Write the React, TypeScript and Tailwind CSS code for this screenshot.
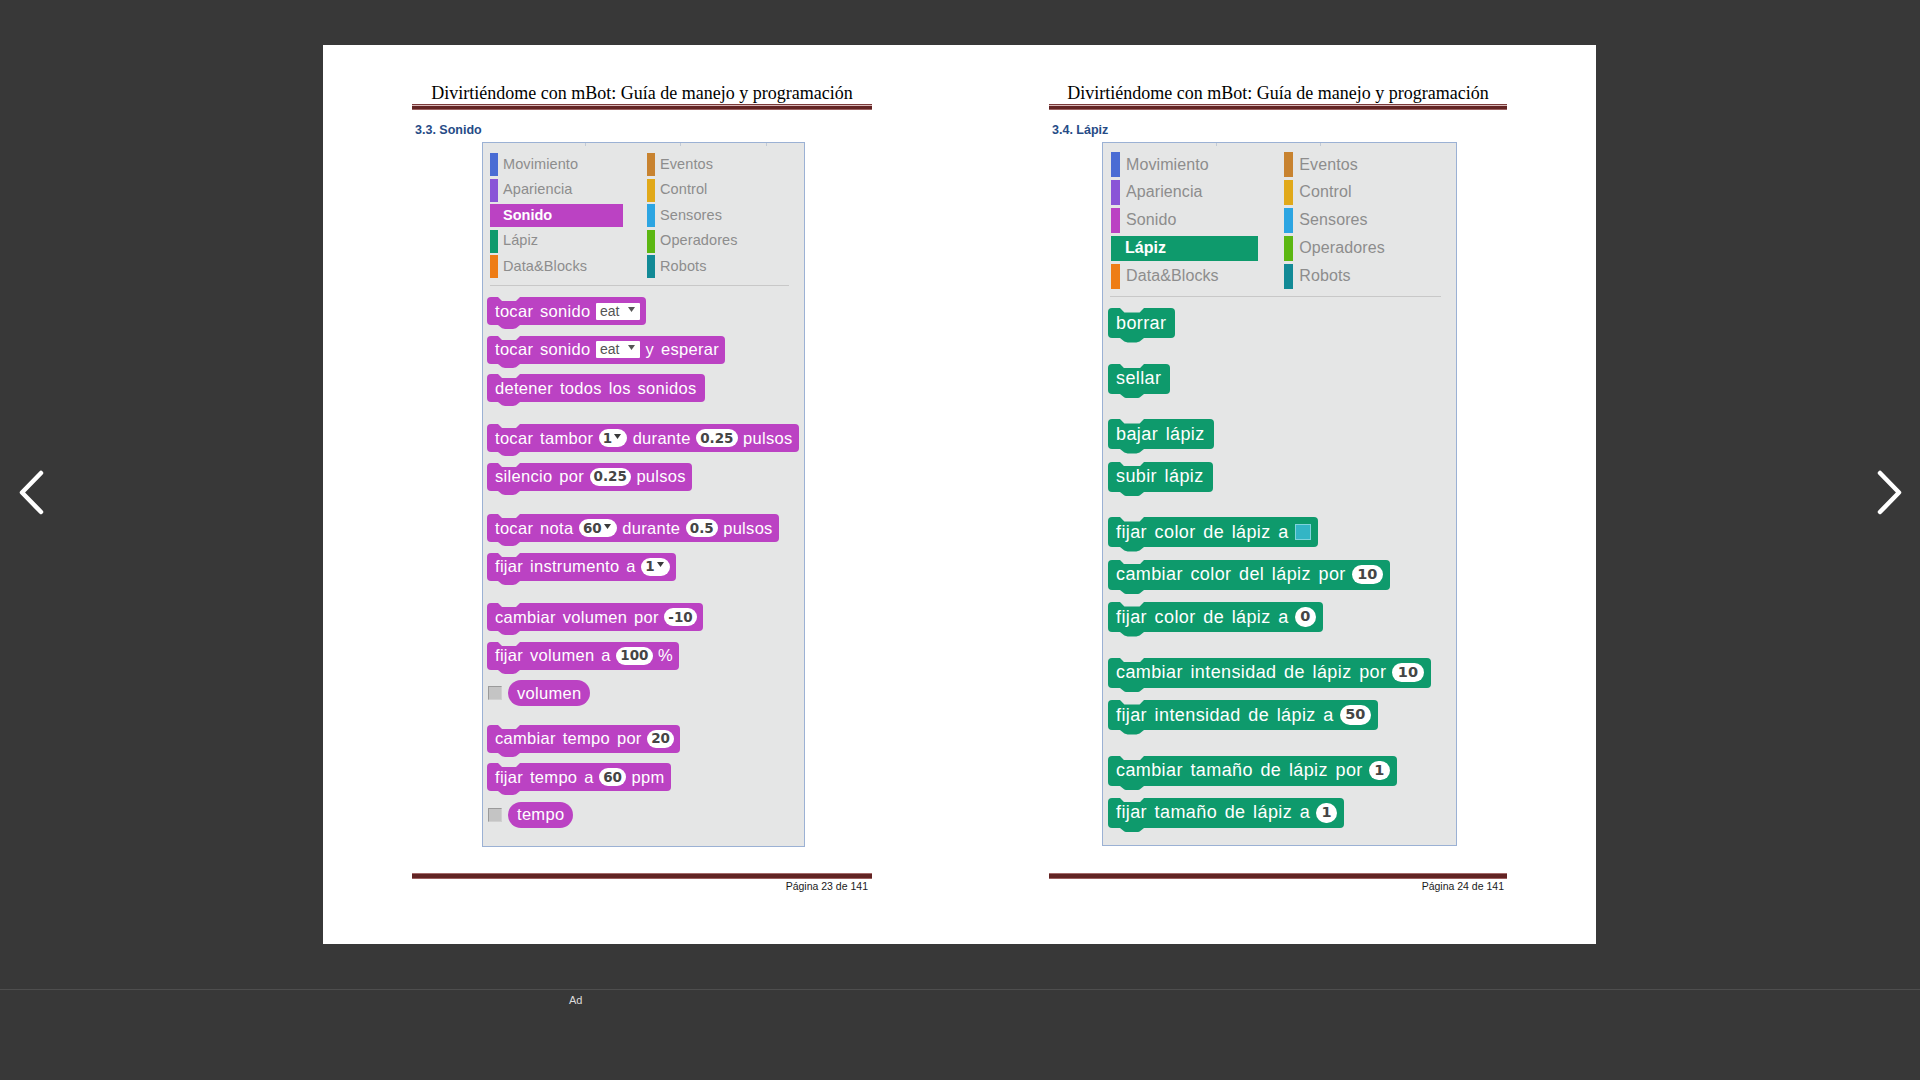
import clsx from 'clsx'
import type { ReactNode } from 'react'

type Size = 'sm' | 'lg'
type Tint = 'purple' | 'green'

interface Cat {
  name: string
  bar: string
}

const leftCats: Cat[] = [
  { name: 'Movimiento', bar: 'bg-[#4a6cd4]' },
  { name: 'Apariencia', bar: 'bg-[#8a55d7]' },
  { name: 'Sonido', bar: 'bg-[#bb42c3]' },
  { name: 'Lápiz', bar: 'bg-[#0e9a6c]' },
  { name: 'Data&Blocks', bar: 'bg-[#ee7d16]' },
]

const rightCats: Cat[] = [
  { name: 'Eventos', bar: 'bg-[#c88330]' },
  { name: 'Control', bar: 'bg-[#e1a91a]' },
  { name: 'Sensores', bar: 'bg-[#2ca5e2]' },
  { name: 'Operadores', bar: 'bg-[#5cb712]' },
  { name: 'Robots', bar: 'bg-[#128a96]' },
]

const blockBg: Record<Tint, string> = {
  purple: 'bg-[#bb42c3]',
  green: 'bg-[#0e9a6c]',
}

const blockFill: Record<Tint, string> = {
  purple: '#bb42c3',
  green: '#0e9a6c',
}

function Categories({ size, selected }: { size: Size; selected: string }) {
  const sm = size === 'sm'
  const row = (c: Cat) => {
    if (c.name === selected) {
      return (
        <div
          key={c.name}
          className={clsx(
            'flex items-center font-bold text-white',
            c.bar,
            sm ? 'h-[23px] w-[133px] pl-[13px] text-[14.5px]' : 'h-[25px] w-[147px] pl-[14px] text-[16px]'
          )}
        >
          {c.name}
        </div>
      )
    }
    return (
      <div key={c.name} className={clsx('flex items-center', sm ? 'h-[23px]' : 'h-[25px]')}>
        <span className={clsx('h-full', c.bar, sm ? 'w-[8px]' : 'w-[9px]')} />
        <span
          className={clsx(
            'text-[#8d8d8d]',
            sm ? 'ml-[5px] text-[14.5px] tracking-[0.1px]' : 'ml-[6px] text-[16px] tracking-[0.1px]'
          )}
        >
          {c.name}
        </span>
      </div>
    )
  }
  return (
    <div className={clsx('flex', sm ? 'pl-[7px]' : 'pl-[8px]')}>
      <div className={clsx('flex flex-col', sm ? 'w-[157px] gap-[2.5px]' : 'w-[173.3px] gap-[2.9px]')}>
        {leftCats.map(row)}
      </div>
      <div className={clsx('flex flex-col', sm ? 'gap-[2.5px]' : 'gap-[2.9px]')}>{rightCats.map(row)}</div>
    </div>
  )
}

function Block({
  size,
  tint,
  className,
  children,
}: {
  size: Size
  tint: Tint
  className?: string
  children: ReactNode
}) {
  const sm = size === 'sm'
  return (
    <div
      className={clsx(
        'relative flex w-fit items-center whitespace-nowrap rounded-[4px] text-white',
        blockBg[tint],
        sm
          ? 'h-[28px] gap-[5.5px] pl-[8px] pr-[6px] text-[16.5px] tracking-[0.3px] [word-spacing:2px]'
          : 'h-[30px] gap-[6px] pl-[8px] pr-[7px] text-[18px] tracking-[0.4px] [word-spacing:2.2px]',
        className
      )}
    >
      {children}
      <svg
        className={clsx('absolute top-0', sm ? 'left-[11px]' : 'left-[12px]')}
        width={sm ? 22 : 24}
        height={sm ? 4 : 4.5}
        viewBox="0 0 22 4"
        preserveAspectRatio="none"
      >
        <polygon points="0,0 22,0 18,4 4,4" fill="#e5e6e6" />
      </svg>
      <svg
        className={clsx('absolute top-full', sm ? 'left-[11px]' : 'left-[12px]')}
        width={sm ? 22 : 24}
        height={sm ? 4 : 4.5}
        viewBox="0 0 22 4"
        preserveAspectRatio="none"
      >
        <polygon points="0,0 22,0 18,3.2 15,4 7,4 4,3.2" fill={blockFill[tint]} />
      </svg>
    </div>
  )
}

function Arrow() {
  return (
    <svg width="7" height="5" viewBox="0 0 7 5" className="ml-[2px] -mt-[4px]">
      <polygon points="0,0 7,0 3.5,5" fill="#3a3a3a" />
    </svg>
  )
}

function Num({ size, children, menu }: { size: Size; children: ReactNode; menu?: boolean }) {
  const sm = size === 'sm'
  return (
    <span
      className={clsx(
        'flex items-center justify-center rounded-full bg-white font-bold tracking-normal text-[#454545] [font-family:"DejaVu_Sans",sans-serif] [word-spacing:0]',
        sm ? 'h-[18px] min-w-[18px] pl-[4px] text-[13.5px]' : 'h-[19.5px] min-w-[19.5px] px-[5.5px] text-[14.5px]',
        sm && (menu ? 'pr-[6px]' : 'pr-[4px]')
      )}
    >
      {children}
      {menu && <Arrow />}
    </span>
  )
}

function Drop() {
  return (
    <span className="flex h-[17px] w-[44px] items-center justify-between rounded-[1px] bg-white pl-[4px] pr-[5px] text-[14px] tracking-normal text-[#555555]">
      eat
      <svg width="7" height="5" viewBox="0 0 7 5" className="-mt-[4px]">
        <polygon points="0,0 7,0 3.5,5" fill="#555555" />
      </svg>
    </span>
  )
}

function Reporter({ label, className }: { label: string; className?: string }) {
  return (
    <div className={clsx('flex items-center', className)}>
      <span className="ml-[1px] h-[14px] w-[14px] border border-t-[#9a9a9a] border-l-[#9a9a9a] border-r-[#d0d0d0] border-b-[#d0d0d0] bg-[#c4c4c4]" />
      <span className="ml-[6px] flex h-[26px] items-center rounded-full bg-[#bb42c3] px-[9px] text-[16.5px] tracking-[0.3px] text-white">
        {label}
      </span>
    </div>
  )
}

function SoundPanel() {
  const s: Size = 'sm'
  const t: Tint = 'purple'
  return (
    <div className="relative ml-[70px] mt-[5px] h-[705px] w-[323px] border border-[#9bb1d4] bg-[#e5e6e6] pt-[10px]">
      <span className="absolute left-[102px] top-0 h-[3px] w-px bg-[#c2cad6]" />
      <span className="absolute left-[197px] top-0 h-[3px] w-px bg-[#c2cad6]" />
      <span className="absolute left-[283px] top-0 h-[3px] w-px bg-[#c2cad6]" />
      <Categories size={s} selected="Sonido" />
      <div className="ml-[7px] mr-[15px] mt-[7px] h-px bg-[#c8c8c8]" />
      <div className="mt-[11px] flex flex-col pl-[4px]">
        <Block size={s} tint={t}>
          <span>tocar sonido</span>
          <Drop />
        </Block>
        <Block size={s} tint={t} className="mt-[10.5px]">
          <span>tocar sonido</span>
          <Drop />
          <span>y esperar</span>
        </Block>
        <Block size={s} tint={t} className="mt-[10.5px] pr-[8px]">
          <span>detener todos los sonidos</span>
        </Block>
        <Block size={s} tint={t} className="mt-[22px]">
          <span>tocar tambor</span>
          <Num size={s} menu>
            1
          </Num>
          <span>durante</span>
          <Num size={s}>0.25</Num>
          <span>pulsos</span>
        </Block>
        <Block size={s} tint={t} className="mt-[10.5px]">
          <span>silencio por</span>
          <Num size={s}>0.25</Num>
          <span>pulsos</span>
        </Block>
        <Block size={s} tint={t} className="mt-[23.5px]">
          <span>tocar nota</span>
          <Num size={s} menu>
            60
          </Num>
          <span>durante</span>
          <Num size={s}>0.5</Num>
          <span>pulsos</span>
        </Block>
        <Block size={s} tint={t} className="mt-[10.5px]">
          <span>fijar instrumento a</span>
          <Num size={s} menu>
            1
          </Num>
        </Block>
        <Block size={s} tint={t} className="mt-[22.5px]">
          <span>cambiar volumen por</span>
          <Num size={s}>-10</Num>
        </Block>
        <Block size={s} tint={t} className="mt-[10.5px]">
          <span>fijar volumen a</span>
          <Num size={s}>100</Num>
          <span>%</span>
        </Block>
        <Reporter label="volumen" className="mt-[10.5px]" />
        <Block size={s} tint={t} className="mt-[18.5px]">
          <span>cambiar tempo por</span>
          <Num size={s}>20</Num>
        </Block>
        <Block size={s} tint={t} className="mt-[10.5px]">
          <span>fijar tempo a</span>
          <Num size={s}>60</Num>
          <span>ppm</span>
        </Block>
        <Reporter label="tempo" className="mt-[10.5px]" />
      </div>
    </div>
  )
}

function PenPanel() {
  const s: Size = 'lg'
  const t: Tint = 'green'
  return (
    <div className="relative ml-[53px] mt-[5px] h-[704px] w-[355px] border border-[#9bb1d4] bg-[#e5e6e6] pt-[9px]">
      <span className="absolute left-[113px] top-0 h-[3px] w-px bg-[#c2cad6]" />
      <span className="absolute left-[217px] top-0 h-[3px] w-px bg-[#c2cad6]" />
      <Categories size={s} selected="Lápiz" />
      <div className="ml-[7px] mt-[7.5px] h-px w-[331px] bg-[#c8c8c8]" />
      <div className="mt-[11px] flex flex-col pl-[5px]">
        <Block size={s} tint={t} className="pr-[9px]">
          <span>borrar</span>
        </Block>
        <Block size={s} tint={t} className="mt-[25.7px] pr-[9px]">
          <span>sellar</span>
        </Block>
        <Block size={s} tint={t} className="mt-[25.7px] pr-[9px]">
          <span>bajar lápiz</span>
        </Block>
        <Block size={s} tint={t} className="mt-[12.3px] pr-[9px]">
          <span>subir lápiz</span>
        </Block>
        <Block size={s} tint={t} className="mt-[25.7px]">
          <span>fijar color de lápiz a</span>
          <span className="h-[16px] w-[16px] border border-[#7fd3dc] bg-[#33b5c5]" />
        </Block>
        <Block size={s} tint={t} className="mt-[12.3px]">
          <span>cambiar color del lápiz por</span>
          <Num size={s}>10</Num>
        </Block>
        <Block size={s} tint={t} className="mt-[12.3px]">
          <span>fijar color de lápiz a</span>
          <Num size={s}>0</Num>
        </Block>
        <Block size={s} tint={t} className="mt-[25.7px]">
          <span>cambiar intensidad de lápiz por</span>
          <Num size={s}>10</Num>
        </Block>
        <Block size={s} tint={t} className="mt-[12.3px]">
          <span>fijar intensidad de lápiz a</span>
          <Num size={s}>50</Num>
        </Block>
        <Block size={s} tint={t} className="mt-[25.7px]">
          <span>cambiar tamaño de lápiz por</span>
          <Num size={s}>1</Num>
        </Block>
        <Block size={s} tint={t} className="mt-[12.3px]">
          <span>fijar tamaño de lápiz a</span>
          <Num size={s}>1</Num>
        </Block>
      </div>
    </div>
  )
}

function HeaderRule() {
  return (
    <div className="mt-[1px] flex flex-col">
      <div className="h-px bg-[#7a3a3a]" />
      <div className="h-px bg-[#d9b8b8]" />
      <div className="h-[3px] bg-[#622423]" />
      <div className="h-px bg-[#9a6262]" />
    </div>
  )
}

function FooterRule({ className }: { className?: string }) {
  return (
    <div className={clsx('flex flex-col', className)}>
      <div className="h-px bg-[#a56b6b]" />
      <div className="h-[4px] bg-[#622423]" />
      <div className="h-px bg-[#9c6060]" />
    </div>
  )
}

function DocPage({
  section,
  page,
  side,
}: {
  section: string
  page: number
  side: 'left' | 'right'
}) {
  const left = side === 'left'
  return (
    <div className={clsx('flex flex-col', left ? 'w-[636px] pl-[89px] pr-[87px]' : 'flex-1 pl-[90px] pr-[89px]')}>
      <div className="mt-[38px] h-[20px] text-center text-[18px] leading-[20px] text-black [font-family:'Liberation_Serif',serif]">
        Divirtiéndome con mBot: Guía de manejo y programación
      </div>
      <HeaderRule />
      <div className="mt-[13px] h-[14px] pl-[3px] text-[12.5px] font-bold leading-[14px] text-[#264b86]">{section}</div>
      {left ? <SoundPanel /> : <PenPanel />}
      <FooterRule className={left ? 'mt-[26px]' : 'mt-[27px]'} />
      <div className={clsx('mt-[1px] text-right text-[10.5px] leading-[12px] text-[#1a1a1a]', left ? 'pr-[4px]' : 'pr-[3px]')}>
        Página {page} de 141
      </div>
    </div>
  )
}

export default function App() {
  return (
    <div className="relative h-[1080px] w-[1920px] overflow-hidden bg-[#383838] [font-family:'Liberation_Sans',Arial,sans-serif]">
      <div className="pt-[45px]">
        <div className="ml-[323px] flex h-[899px] w-[1273px] bg-white">
          <DocPage section="3.3. Sonido" page={23} side="left" />
          <DocPage section="3.4. Lápiz" page={24} side="right" />
        </div>
      </div>
      <div className="mt-[45px] h-[46px] border-t border-[#4e4e4e]">
        <div className="ml-[569px] mt-[3px] text-[11px] leading-[14px] text-[#dcdcdc]">Ad</div>
      </div>

      <svg className="absolute left-[19px] top-[470px]" width="26" height="45" viewBox="0 0 26 45">
        <polyline
          points="22,3 3,22.5 22,42"
          fill="none"
          stroke="#ffffff"
          strokeWidth="4.5"
          strokeLinecap="round"
          strokeLinejoin="round"
        />
      </svg>
      <svg className="absolute left-[1876px] top-[470px]" width="26" height="45" viewBox="0 0 26 45">
        <polyline
          points="4,3 23,22.5 4,42"
          fill="none"
          stroke="#ffffff"
          strokeWidth="4.5"
          strokeLinecap="round"
          strokeLinejoin="round"
        />
      </svg>
    </div>
  )
}
